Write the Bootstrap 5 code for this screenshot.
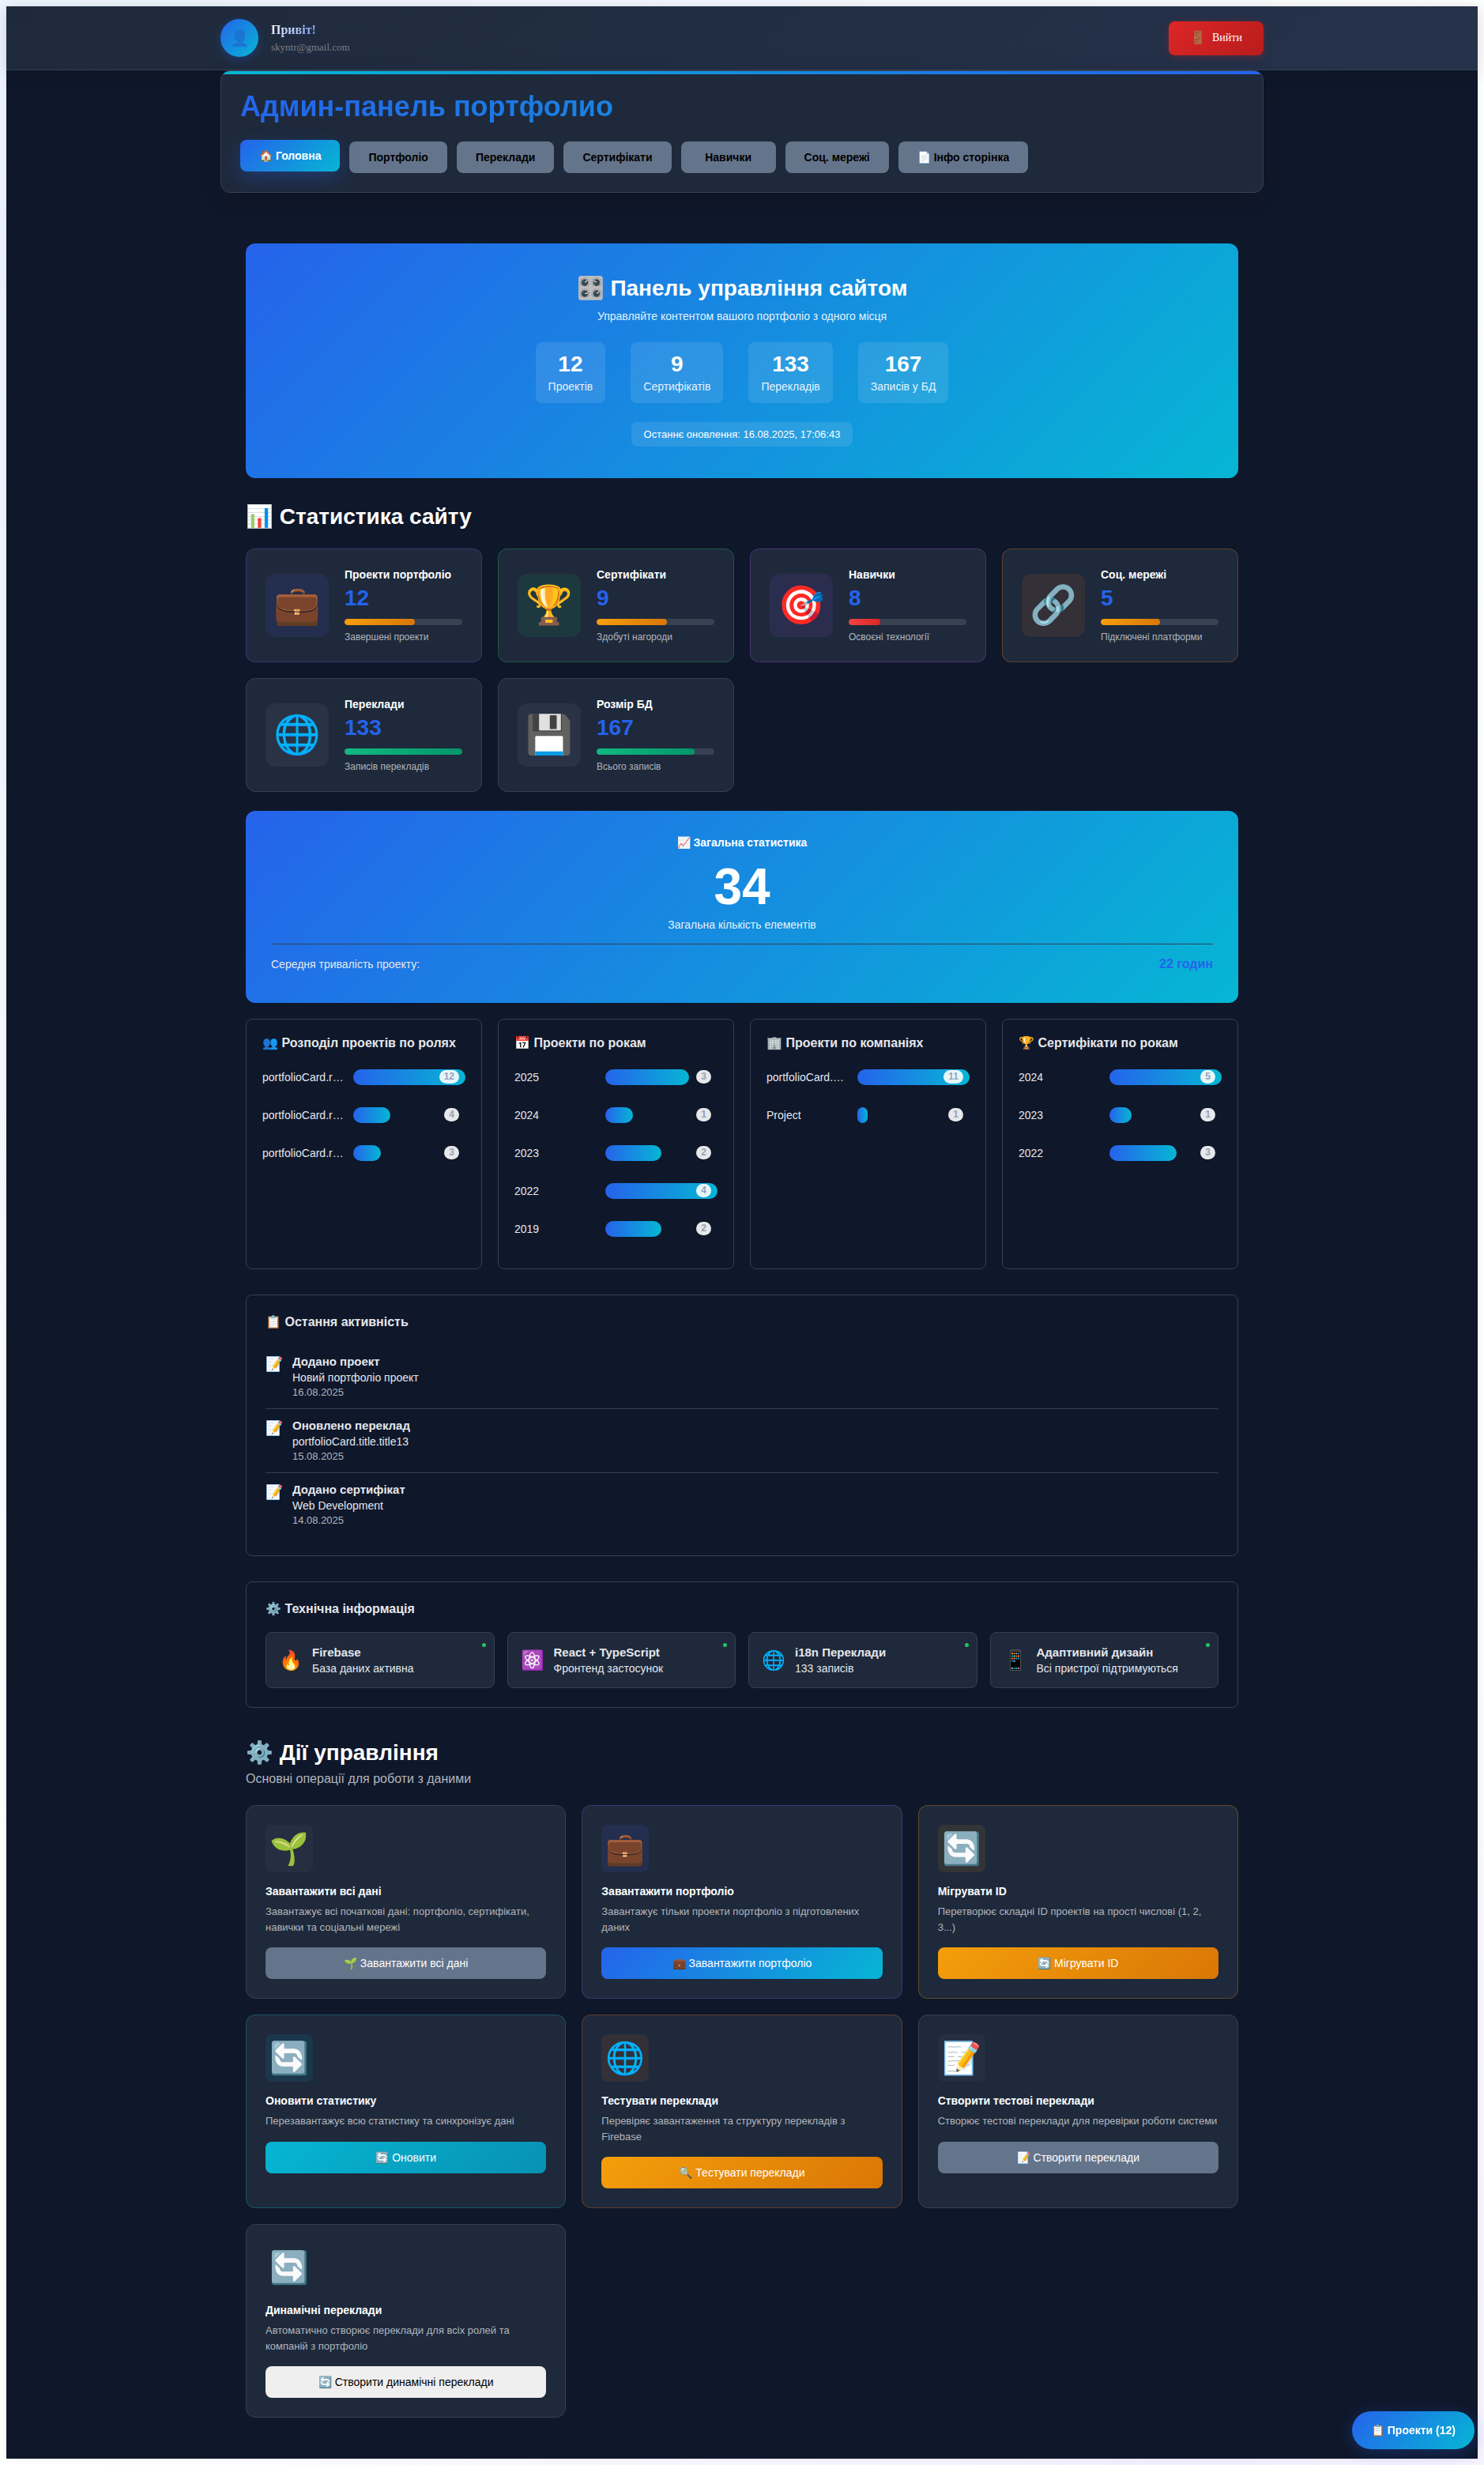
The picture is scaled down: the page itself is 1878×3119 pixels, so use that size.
<!DOCTYPE html>
<html lang="uk">
<head>
<meta charset="utf-8">
<meta name="viewport" content="width=device-width, initial-scale=1">
<title>Админ-панель портфолио</title>
<link href="https://cdn.jsdelivr.net/npm/bootstrap@5.3.0/dist/css/bootstrap.min.css" rel="stylesheet">
<style>
:root{--ink:#0f172a;--panel:#1e293b;--line:#334155;--blue:#2563eb;--cyan:#06b6d4;--grad:linear-gradient(135deg,#2563eb 0%,#06b6d4 100%)}
body{margin:0;padding:8px;font-family:"Liberation Sans",Arial,sans-serif;font-size:14px;line-height:18px;color:#e5e7eb;
 background:radial-gradient(circle at 0 10%,#ecf3ff 0,transparent 60%),radial-gradient(circle at 80% 100%,#f3f0ff 0,transparent 40%),#fff}
h1,h2,h3,h4,p{margin:0}
.shell{background:var(--ink);box-shadow:0 0 12px rgba(0,0,0,.06)}
.topbar{background:linear-gradient(135deg,#1e293b,#26324b);border-bottom:1px solid var(--line);box-shadow:0 4px 20px rgba(0,0,0,.1);font-family:"Liberation Serif",serif;min-height:81px}
.avatar{width:48px;height:48px;border-radius:50%;background:var(--grad);font-size:20px;box-shadow:0 4px 12px rgba(37,99,235,.3)}
.hello{font-size:16px;line-height:20px;font-weight:700;background:linear-gradient(135deg,#fff,#2563eb);-webkit-background-clip:text;background-clip:text;color:transparent}
.mail{font-size:13px;line-height:16px;color:#7a7f87}
.btn{border:0;border-radius:8px;font-size:14px;line-height:16px;padding:12px 24px;color:#fff}
.btn-exit{min-width:120px;min-height:43px;font-family:inherit;background:linear-gradient(135deg,#dc2626,#b91c1c);box-shadow:0 2px 8px rgba(220,38,38,.3)}
.adminhead{position:relative;background:var(--panel);border:1px solid var(--line);border-radius:12px;padding:24px;overflow:hidden;box-shadow:0 8px 32px rgba(0,0,0,.1)}
.adminhead::before{content:"";position:absolute;inset:0 0 auto;height:4px;background:linear-gradient(90deg,#06b6d4,#2563eb)}
.admintitle{font-size:36px;line-height:41px;font-weight:700;margin-bottom:24px;background:var(--grad);-webkit-background-clip:text;background-clip:text;color:transparent}
.tabs{gap:12px}
.tabbtn{min-width:120px;background:#64748b;color:#000;font-weight:700}
.tabbtn.active{background:var(--grad);color:#fff;box-shadow:0 8px 24px rgba(37,99,235,.3);transform:translateY(-2px)}
.content{padding:64px 32px 52px}
.gridrow{--bs-gutter-x:20px;--bs-gutter-y:20px}
.hero{background:var(--grad);border-radius:12px;padding:40px;color:#fff}
.big{font-size:28px;line-height:33px;font-weight:700;color:#fff}
.statshead{margin:32px 0 24px}
.hero .big{line-height:34px;margin-bottom:10px}
.gap-wide{gap:32px}
.soft{line-height:17px;color:rgba(255,255,255,.9)}
.chip{background:rgba(255,255,255,.1);border-radius:8px}
.chip-stat{padding:12px 16px}
.chip-stat strong{display:block;font-size:28px;line-height:32px;margin-bottom:4px;color:#fff}
.chip-time{font-size:13px;line-height:15px;padding:8px 16px}
.tile{background:var(--panel);border:1px solid var(--line);border-radius:12px;padding:24px;height:100%;color:#fff;--tint:rgba(255,255,255,.05)}
.stat{display:flex;align-items:center;gap:20px}
.t-blue{border-color:rgba(99,102,241,.3);--tint:rgba(99,102,241,.1)}
.t-green{border-color:rgba(34,197,94,.3);--tint:rgba(34,197,94,.1)}
.t-purple{border-color:rgba(168,85,247,.3);--tint:rgba(168,85,247,.1)}
.t-orange{border-color:rgba(249,115,22,.3);--tint:rgba(249,115,22,.1)}
.t-amber{border-color:rgba(245,158,11,.3);--tint:rgba(245,158,11,.1)}
.t-cyan{border-color:rgba(6,182,212,.3);--tint:rgba(6,182,212,.1)}
.t-slate{--tint:rgba(255,255,255,.03)}
.t-none{--tint:transparent}
.ico{flex:none;display:flex;align-items:center;justify-content:center;width:80px;height:80px;font-size:48px;line-height:1;border-radius:12px;background:var(--tint)}
.name{font-size:14px;line-height:17px;font-weight:700;color:#fff}
.num{font-size:28px;line-height:33px;font-weight:700;color:var(--blue);margin:4px 0 10px}
.progress{--bs-progress-height:8px;--bs-progress-bg:#374151;--bs-progress-border-radius:4px;margin-bottom:8px}
.progress-bar{border-radius:4px}
.p-warn{background:linear-gradient(90deg,#f59e0b,#d97706)}
.p-bad{background:linear-gradient(90deg,#ef4444,#dc2626)}
.p-good{background:linear-gradient(90deg,#10b981,#059669)}
.cap{font-size:12px;line-height:14px;color:#b2b6bd}
.total{background:var(--grad);border-radius:12px;padding:32px;color:#fff;margin-bottom:20px}
.total .name,.total .soft{line-height:16px}
.total .huge{font-size:64px;line-height:72px;font-weight:700;margin:12px 0 4px}
.total .foot{border-top:1px solid #334155;margin-top:16px;padding:16px 0 8px;color:#e5e7eb}
.foot strong{font-size:16px;color:var(--blue)}
.frame{border:1px solid var(--line);border-radius:8px;padding:24px}
.spaced{margin-top:32px}
.sub{font-size:16px;line-height:19px;font-weight:700;color:#e5e7eb;margin-bottom:20px}
.chart{padding:20px 20px 36px;height:100%}
.bars{display:flex;flex-direction:column;gap:20px}
.barrow{display:flex;align-items:center;gap:12px;height:28px}
.barrow>span{width:40%;flex:none}
.track{position:relative;flex:1;height:20px}
.fill{height:20px;border-radius:10px;background:linear-gradient(90deg,#2563eb,#06b6d4)}
.cnt{position:absolute;right:8px;top:1px;font-size:12px;line-height:13px;font-weight:700;padding:2px 6px;border-radius:10px;background:rgba(255,255,255,.9);color:#94a3b8}
.act{display:flex;gap:12px;padding:12px 0;border-bottom:1px solid var(--line)}
.act:last-child{border-bottom:0}
.act i{font-style:normal;font-size:18px;line-height:24px}
.act b,.tech b{display:block;font-size:15px;margin-bottom:2px}
.act small{display:block;margin-top:2px;font-size:13px;line-height:16px;color:#b2b6bd}
.tech{position:relative;display:flex;align-items:center;gap:12px;background:var(--panel);border:1px solid var(--line);border-radius:8px;padding:15px 16px;min-height:71px;height:100%}
.tech i{font-style:normal;font-size:24px;line-height:28px}
.tech::after{content:"";position:absolute;top:13px;right:10px;width:5px;height:5px;border-radius:50%;background:#22c55e}
.techrow{--bs-gutter-x:16px;--bs-gutter-y:16px}
.actions{margin-top:40px}
.lede{font-size:16px;line-height:18px;margin:8px 0 24px;color:#b2b6bd}
.action .ico{width:60px;height:60px;font-size:40px;border-radius:8px;margin-bottom:16px}
.action .name{line-height:16px;margin-bottom:8px}
.action p{font-size:13px;line-height:1.5;color:#b2b6bd;margin-bottom:16px}
.b-slate{background:#64748b}.b-blue{background:var(--grad)}
.b-amber{background:linear-gradient(135deg,#f59e0b,#d97706)}
.b-cyan{background:linear-gradient(135deg,#06b6d4,#0891b2)}
.b-light{background:#efefef;color:#000}
.float-btn{right:12px;bottom:20px;border-radius:24px;padding:16px 24px;font-weight:700;background:var(--grad);box-shadow:0 4px 20px rgba(37,99,235,.3)}
</style>
<script src="https://cdn.jsdelivr.net/npm/bootstrap@5.3.0/dist/js/bootstrap.bundle.min.js" defer></script>
</head>
<body>
<div class="shell">
<header class="topbar d-flex">
 <div class="container px-0 d-flex align-items-center justify-content-between">
  <div class="d-flex align-items-center gap-3">
   <div class="avatar d-flex align-items-center justify-content-center">👤</div>
   <div class="d-flex flex-column gap-1"><div class="hello">Привіт!</div><div class="mail">skyntr@gmail.com</div></div>
  </div>
  <button type="button" class="btn btn-exit d-flex align-items-center justify-content-center gap-2"><span class="fs-6">🚪</span> Вийти</button>
 </div>
</header>
<div class="container px-0">
 <div class="adminhead">
  <h1 class="admintitle">Админ-панель портфолио</h1>
  <nav class="tabs d-flex flex-wrap">
   <button type="button" class="btn tabbtn active">🏠 Головна</button>
   <button type="button" class="btn tabbtn">Портфоліо</button>
   <button type="button" class="btn tabbtn">Переклади</button>
   <button type="button" class="btn tabbtn">Сертифікати</button>
   <button type="button" class="btn tabbtn">Навички</button>
   <button type="button" class="btn tabbtn">Соц. мережі</button>
   <button type="button" class="btn tabbtn">📄 Інфо сторінка</button>
  </nav>
 </div>
 <main class="content">
  <section class="hero text-center">
   <h2 class="big">🎛️ Панель управління сайтом</h2>
   <p class="soft mb-4">Управляйте контентом вашого портфоліо з одного місця</p>
   <div class="gap-wide d-flex flex-wrap justify-content-center mb-4">
    <div class="chip chip-stat soft"><strong>12</strong>Проектів</div>
    <div class="chip chip-stat soft"><strong>9</strong>Сертифікатів</div>
    <div class="chip chip-stat soft"><strong>133</strong>Перекладів</div>
    <div class="chip chip-stat soft"><strong>167</strong>Записів у БД</div>
   </div>
   <div class="d-flex justify-content-center"><div class="chip chip-time">Останнє оновлення: 16.08.2025, 17:06:43</div></div>
  </section>

  <section>
   <h2 class="big statshead">📊 Статистика сайту</h2>
   <div class="row gridrow row-cols-1 row-cols-md-2 row-cols-xl-4">
    <div class="col"><div class="tile stat t-blue"><div class="ico">💼</div><div class="flex-grow-1"><h3 class="name">Проекти портфоліо</h3><div class="num">12</div><div class="progress"><div class="progress-bar p-warn" style="width:60%"></div></div><div class="cap">Завершені проекти</div></div></div></div>
    <div class="col"><div class="tile stat t-green"><div class="ico">🏆</div><div class="flex-grow-1"><h3 class="name">Сертифікати</h3><div class="num">9</div><div class="progress"><div class="progress-bar p-warn" style="width:60%"></div></div><div class="cap">Здобуті нагороди</div></div></div></div>
    <div class="col"><div class="tile stat t-purple"><div class="ico">🎯</div><div class="flex-grow-1"><h3 class="name">Навички</h3><div class="num">8</div><div class="progress"><div class="progress-bar p-bad" style="width:27%"></div></div><div class="cap">Освоєні технології</div></div></div></div>
    <div class="col"><div class="tile stat t-orange"><div class="ico">🔗</div><div class="flex-grow-1"><h3 class="name">Соц. мережі</h3><div class="num">5</div><div class="progress"><div class="progress-bar p-warn" style="width:50%"></div></div><div class="cap">Підключені платформи</div></div></div></div>
    <div class="col"><div class="tile stat"><div class="ico">🌐</div><div class="flex-grow-1"><h3 class="name">Переклади</h3><div class="num">133</div><div class="progress"><div class="progress-bar p-good" style="width:100%"></div></div><div class="cap">Записів перекладів</div></div></div></div>
    <div class="col"><div class="tile stat"><div class="ico">💾</div><div class="flex-grow-1"><h3 class="name">Розмір БД</h3><div class="num">167</div><div class="progress"><div class="progress-bar p-good" style="width:83%"></div></div><div class="cap">Всього записів</div></div></div></div>
   </div>
  </section>

  <section class="total mt-4 text-center">
   <h3 class="name">📈 Загальна статистика</h3>
   <div class="huge">34</div>
   <div class="soft">Загальна кількість елементів</div>
   <div class="foot d-flex justify-content-between"><span>Середня тривалість проекту:</span><strong>22 годин</strong></div>
  </section>

  <section>
  <div class="row gridrow row-cols-1 row-cols-md-2 row-cols-xl-4">
   <div class="col"><div class="frame chart"><h3 class="sub">👥 Розподіл проектів по ролях</h3><div class="bars">
    <div class="barrow"><span>portfolioCard.r…</span><div class="track"><div class="fill" style="width:100%"></div><b class="cnt">12</b></div></div>
    <div class="barrow"><span>portfolioCard.r…</span><div class="track"><div class="fill" style="width:33%"></div><b class="cnt">4</b></div></div>
    <div class="barrow"><span>portfolioCard.r…</span><div class="track"><div class="fill" style="width:25%"></div><b class="cnt">3</b></div></div>
   </div></div></div>
   <div class="col"><div class="frame chart"><h3 class="sub">📅 Проекти по рокам</h3><div class="bars">
    <div class="barrow"><span>2025</span><div class="track"><div class="fill" style="width:75%"></div><b class="cnt">3</b></div></div>
    <div class="barrow"><span>2024</span><div class="track"><div class="fill" style="width:25%"></div><b class="cnt">1</b></div></div>
    <div class="barrow"><span>2023</span><div class="track"><div class="fill" style="width:50%"></div><b class="cnt">2</b></div></div>
    <div class="barrow"><span>2022</span><div class="track"><div class="fill" style="width:100%"></div><b class="cnt">4</b></div></div>
    <div class="barrow"><span>2019</span><div class="track"><div class="fill" style="width:50%"></div><b class="cnt">2</b></div></div>
   </div></div></div>
   <div class="col"><div class="frame chart"><h3 class="sub">🏢 Проекти по компаніях</h3><div class="bars">
    <div class="barrow"><span>portfolioCard.…</span><div class="track"><div class="fill" style="width:100%"></div><b class="cnt">11</b></div></div>
    <div class="barrow"><span>Project</span><div class="track"><div class="fill" style="width:9%"></div><b class="cnt">1</b></div></div>
   </div></div></div>
   <div class="col"><div class="frame chart"><h3 class="sub">🏆 Сертифікати по рокам</h3><div class="bars">
    <div class="barrow"><span>2024</span><div class="track"><div class="fill" style="width:100%"></div><b class="cnt">5</b></div></div>
    <div class="barrow"><span>2023</span><div class="track"><div class="fill" style="width:20%"></div><b class="cnt">1</b></div></div>
    <div class="barrow"><span>2022</span><div class="track"><div class="fill" style="width:60%"></div><b class="cnt">3</b></div></div>
   </div></div></div>
  </div>
  </section>

  <section class="frame spaced">
   <h3 class="sub">📋 Остання активність</h3>
   <div class="act"><i>📝</i><div><b>Додано проект</b>Новий портфоліо проект<small>16.08.2025</small></div></div>
   <div class="act"><i>📝</i><div><b>Оновлено переклад</b>portfolioCard.title.title13<small>15.08.2025</small></div></div>
   <div class="act"><i>📝</i><div><b>Додано сертифікат</b>Web Development<small>14.08.2025</small></div></div>
  </section>

  <section class="frame spaced">
   <h3 class="sub">⚙️ Технічна інформація</h3>
   <div class="row techrow row-cols-1 row-cols-md-2 row-cols-xl-4">
    <div class="col"><div class="tech"><i>🔥</i><div><b>Firebase</b>База даних активна</div></div></div>
    <div class="col"><div class="tech"><i>⚛️</i><div><b>React + TypeScript</b>Фронтенд застосунок</div></div></div>
    <div class="col"><div class="tech"><i>🌐</i><div><b>i18n Переклади</b>133 записів</div></div></div>
    <div class="col"><div class="tech"><i>📱</i><div><b>Адаптивний дизайн</b>Всі пристрої підтримуються</div></div></div>
   </div>
  </section>

  <section class="actions">
   <h2 class="big">⚙️ Дії управління</h2>
   <p class="lede">Основні операції для роботи з даними</p>
   <div class="row gridrow row-cols-1 row-cols-md-2 row-cols-lg-3">
    <div class="col"><div class="tile t-slate action"><div class="ico">🌱</div><h3 class="name">Завантажити всі дані</h3><p>Завантажує всі початкові дані: портфоліо, сертифікати, навички та соціальні мережі</p><button type="button" class="btn w-100 b-slate">🌱 Завантажити всі дані</button></div></div>
    <div class="col"><div class="tile t-blue action"><div class="ico">💼</div><h3 class="name">Завантажити портфоліо</h3><p>Завантажує тільки проекти портфоліо з підготовлених даних</p><button type="button" class="btn w-100 b-blue">💼 Завантажити портфоліо</button></div></div>
    <div class="col"><div class="tile t-amber action"><div class="ico">🔄</div><h3 class="name">Мігрувати ID</h3><p>Перетворює складні ID проектів на прості числові (1, 2, 3...)</p><button type="button" class="btn w-100 b-amber">🔄 Мігрувати ID</button></div></div>
    <div class="col"><div class="tile t-cyan action"><div class="ico">🔄</div><h3 class="name">Оновити статистику</h3><p>Перезавантажує всю статистику та синхронізує дані</p><button type="button" class="btn w-100 b-cyan">🔄 Оновити</button></div></div>
    <div class="col"><div class="tile t-orange action"><div class="ico">🌐</div><h3 class="name">Тестувати переклади</h3><p>Перевіряє завантаження та структуру перекладів з Firebase</p><button type="button" class="btn w-100 b-amber">🔍 Тестувати переклади</button></div></div>
    <div class="col"><div class="tile t-slate action"><div class="ico">📝</div><h3 class="name">Створити тестові переклади</h3><p>Створює тестові переклади для перевірки роботи системи</p><button type="button" class="btn w-100 b-slate">📝 Створити переклади</button></div></div>
    <div class="col"><div class="tile t-none action"><div class="ico">🔄</div><h3 class="name">Динамічні переклади</h3><p>Автоматично створює переклади для всіх ролей та компаній з портфоліо</p><button type="button" class="btn w-100 b-light">🔄 Створити динамічні переклади</button></div></div>
   </div>
  </section>
 </main>
</div>
</div>
<button type="button" class="btn float-btn position-fixed">📋 Проекти (12)</button>
</body>
</html>
